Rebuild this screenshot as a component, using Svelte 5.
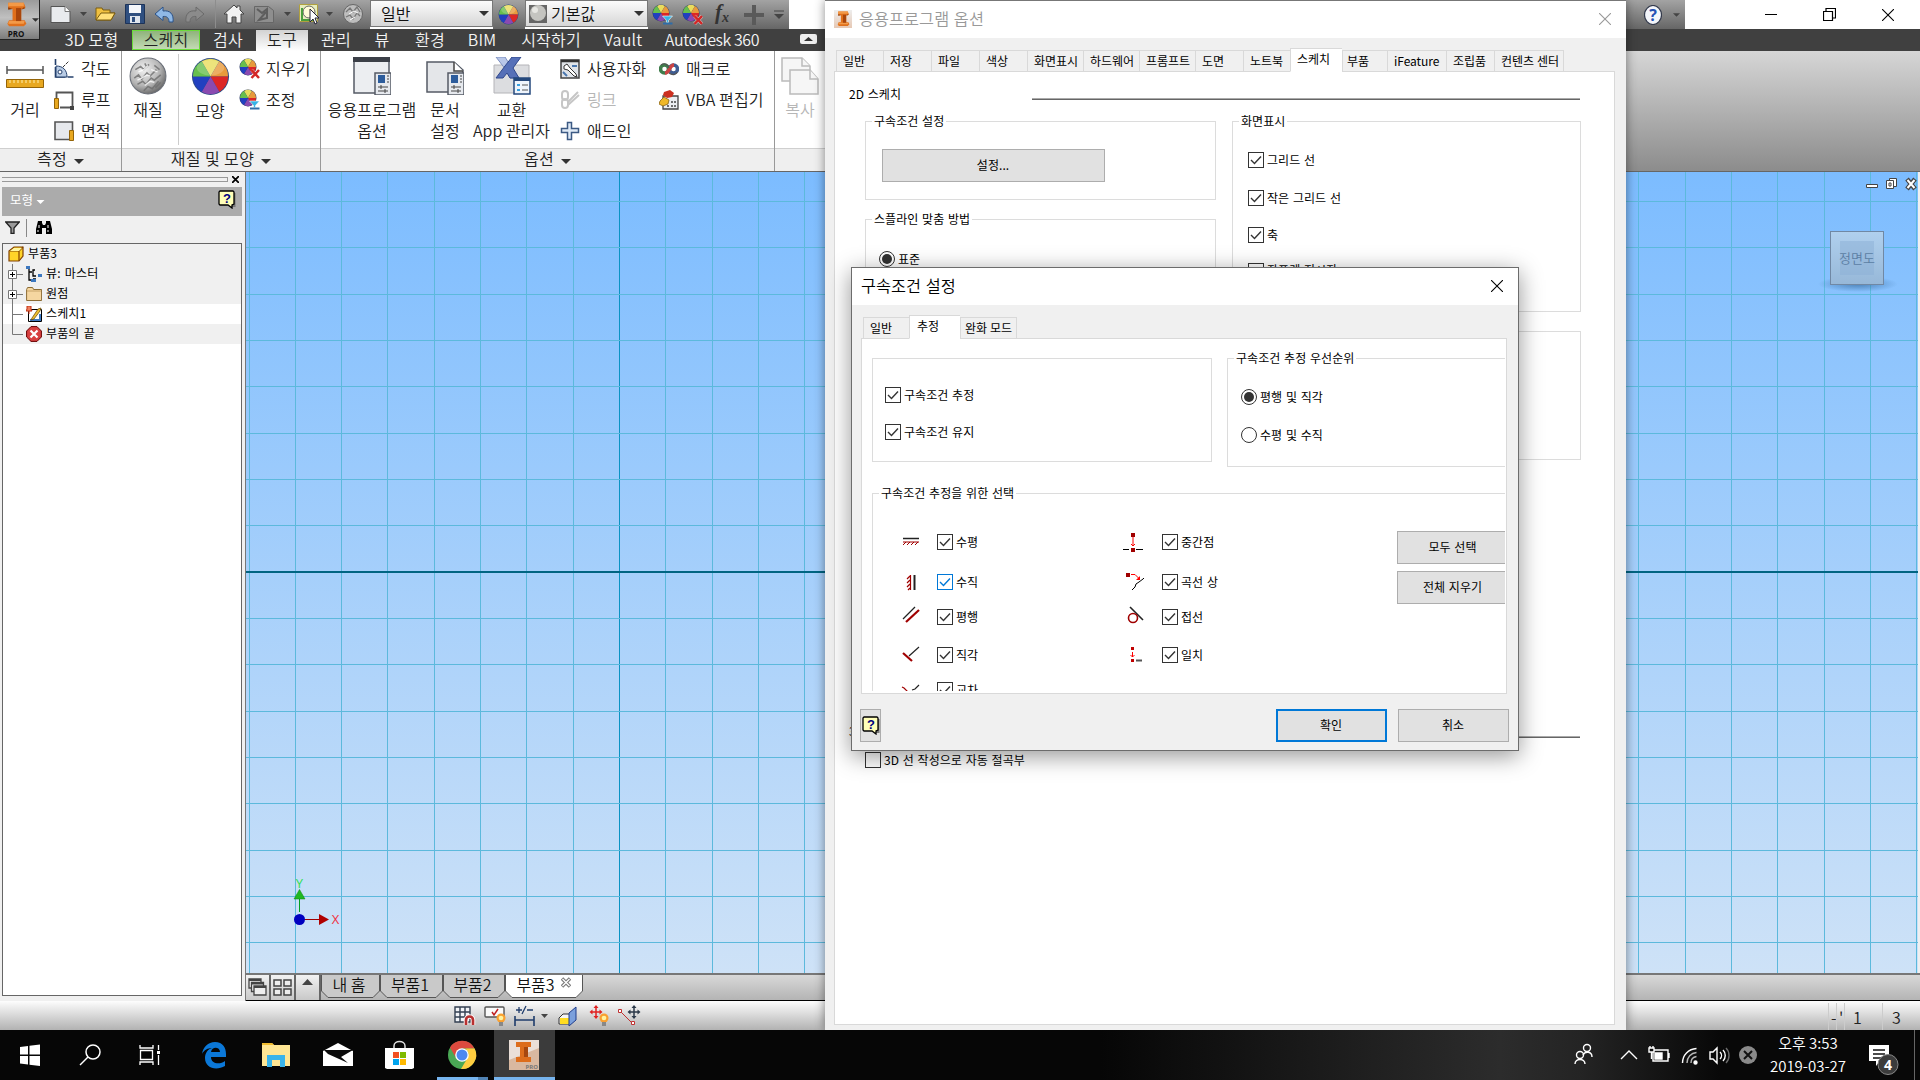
<script lang="ts">
  const ribbonTabs = [
    { name: '3D 모형', w: 81 },
    { name: '스케치', w: 68, kind: 'green' },
    { name: '검사', w: 56 },
    { name: '도구', w: 52, kind: 'active' },
    { name: '관리', w: 56 },
    { name: '뷰', w: 36 },
    { name: '환경', w: 60 },
    { name: 'BIM', w: 44 },
    { name: '시작하기', w: 94 },
    { name: 'Vault', w: 50 },
    { name: 'Autodesk 360', w: 128, kind: 'tight' }
  ];

  const optionTabs = [
    { name: '일반', w: 47 },
    { name: '저장', w: 48 },
    { name: '파일', w: 48 },
    { name: '색상', w: 48 },
    { name: '화면표시', w: 56 },
    { name: '하드웨어', w: 56 },
    { name: '프롬프트', w: 56 },
    { name: '도면', w: 48 },
    { name: '노트북', w: 47 },
    { name: '스케치', w: 52 },
    { name: '부품', w: 45 },
    { name: 'iFeature', w: 59 },
    { name: '조립품', w: 48 },
    { name: '컨텐츠 센터', w: 70 }
  ];
  let optionTab = $state('스케치');

  const constraintTabs = [
    { name: '일반', w: 46 },
    { name: '추정', w: 51 },
    { name: '완화 모드', w: 57 }
  ];
  let constraintTab = $state('추정');

  // left and right item of each row
  const constraints = [
    ['수평', '중간점'],
    ['수직', '곡선 상'],
    ['평행', '접선'],
    ['직각', '일치'],
    ['교차', '']
  ];

  const docTabs = [
    { name: '내 홈', w: 59 },
    { name: '부품1', w: 63 },
    { name: '부품2', w: 62 },
    { name: '부품3', w: 78 }
  ];

  // sketch grid, origin of the canvas is 246,172
  const step = 46.33;
  const vlines = Array.from({ length: 37 }, (_, i) => Math.round(2.5 + i * step));
  const hlines = Array.from({ length: 17 }, (_, i) => Math.round(29 + i * step));
</script>

{#snippet caret()}
  <svg class="caret" width="10" height="5" viewBox="0 0 10 5"><path d="M0 0h10L5 5z" fill="currentColor" /></svg>
{/snippet}

{#snippet wheel(size)}
  <svg width={size} height={size} viewBox="0 0 40 40">
    <circle cx="20" cy="20" r="19" fill="#2c4a86" />
    <path d="M20 20L11 4.400A18 18 0 0 1 29 4.400z" fill="#e9dc5c" />
    <path d="M20 20L29 4.400A18 18 0 0 1 38 20z" fill="#e89a3c" />
    <path d="M20 20L38 20A18 18 0 0 1 29 35.600z" fill="#dc2626" />
    <path d="M20 20L29 35.600A18 18 0 0 1 11 35.600z" fill="#8a4ab0" />
    <path d="M20 20L11 35.600A18 18 0 0 1 2 20z" fill="#2140c0" />
    <path d="M20 20L2 20A18 18 0 0 1 11 4.400z" fill="#67bf4d" />
    <ellipse cx="20" cy="11" rx="14" ry="8" fill="#fff" opacity=".2" />
  </svg>
{/snippet}

{#snippet wheelMark(kind)}
  <svg width="21" height="21" viewBox="0 0 21 21">
    <circle cx="9" cy="9" r="8.500" fill="#2c3a66" />
    <path d="M9 9L5 2A8 8 0 0 1 13 2z" fill="#e9dc5c" />
    <path d="M9 9L13 2A8 8 0 0 1 17 9z" fill="#e89a3c" />
    <path d="M9 9H17A8 8 0 0 1 13 16z" fill="#dc2626" />
    <path d="M9 9L13 16A8 8 0 0 1 5 16z" fill="#8a4ab0" />
    <path d="M9 9L5 16A8 8 0 0 1 1 9z" fill="#2140c0" />
    <path d="M9 9H1A8 8 0 0 1 5 2z" fill="#67bf4d" />
    {#if kind === 'x'}
      <path d="M12.500 12l7.500 8M20 12l-7.500 8" stroke="#fff" stroke-width="3.500" opacity=".5" />
      <path d="M12.500 12l7.500 8M20 12l-7.500 8" stroke="#d32626" stroke-width="2.500" />
    {:else}
      <path d="M10.500 12h10l-4 4.500v2h-2v-2z" fill="#35b3e6" stroke="#fff" stroke-width=".6" />
      <path d="M11 19.500h9.500" stroke="#2e6da8" stroke-width="2" />
    {/if}
  </svg>
{/snippet}

{#snippet ball(size)}
  <svg width={size} height={size} viewBox="0 0 36 36">
    <defs>
      <radialGradient id="ballg" cx=".38" cy=".32" r=".75">
        <stop offset="0" stop-color="#f2f2f2" />
        <stop offset=".6" stop-color="#b4b4b4" />
        <stop offset="1" stop-color="#5c5c5c" />
      </radialGradient>
    </defs>
    <circle cx="18" cy="18" r="17" fill="url(#ballg)" stroke="#6a6f78" />
    <g fill="none" stroke="#6d6d6d" stroke-width="1.500" opacity=".8">
      <path d="M6 12l5-3 3 3 5-5M5 20l4-3 3 4 5-6 3 3 6-6M8 26l5-3 3 3 5-6 3 2 6-5M14 32l4-4 4 2 6-7M24 8l5 4M25 29l5-5M15 6l2 4" />
    </g>
    <g fill="none" stroke="#fff" stroke-width="1.300" opacity=".8">
      <path d="M9 14l5-2 4-4M8 22l4-2 5-3 3 1M15 27l5-4 4 1M21 12l6 2" />
    </g>
  </svg>
{/snippet}

{#snippet inventor(size)}
  <svg width={size} height={size} viewBox="0 0 30 30">
    <path d="M6 1h18l2 5-2 2h-3v13h4l2 4-3 3H7l-2-3 2-4h4V8H6z" fill="#e0701c" />
    <path d="M6 1h18v4H6zM7 22h18l-1 3H6z" fill="#f39a48" />
    <path d="M15 7h6v15h-6z" fill="#a9460c" />
    <path d="M6 6l5 2-5 1zM24 6l2 1-5 2z" fill="#8c3a0a" />
  </svg>
{/snippet}

{#snippet helpIcon()}
  <svg width="18" height="19" viewBox="0 0 18 19">
    <path d="M3 3h14.500v14H14z" fill="#777" />
    <path d="M2 1h13l1 1v12l-2 1v3l-4-3H2l-1-1V2z" fill="#ffffb8" stroke="#000" stroke-width="1.300" />
    <text x="9" y="13" text-anchor="middle" class="qm">?</text>
  </svg>
{/snippet}

{#snippet check(label, on = true, blue = false)}
  <div class="check">
    <svg class:blue width="16" height="16" viewBox="0 0 16 16">
      <rect x=".5" y=".5" width="15" height="15" fill="#fff" stroke="currentColor" />
      {#if on}<path d="M3 8l3.500 3.500L13 4.500" fill="none" stroke="currentColor" stroke-width="1.400" />{/if}
    </svg>
    <span>{label}</span>
  </div>
{/snippet}

{#snippet radio(label, on)}
  <div class="check">
    <svg width="16" height="16" viewBox="0 0 16 16">
      <circle cx="8" cy="8" r="7.500" fill="#fff" stroke="#333" />
      {#if on}<circle cx="8" cy="8" r="5" fill="#333" />{/if}
    </svg>
    <span>{label}</span>
  </div>
{/snippet}

{#snippet cross(size, w = 1.1)}
  <svg width={size} height={size} viewBox="0 0 12 12"><path d="M0 0l12 12M12 0L0 12" stroke="currentColor" stroke-width={w} /></svg>
{/snippet}

{#snippet constraintIcon(name)}
  <svg width="22" height="22" viewBox="0 0 22 22" fill="none">
    {#if name === '수평'}
      <path d="M3 7.500h16" stroke="#222" stroke-width="1.500" />
      <path d="M3 11h16M6 11l-3 3M10 11l-3 3M14 11l-3 3M18 11l-3 3" stroke="#a00000" />
    {:else if name === '수직'}
      <path d="M14.500 4v15" stroke="#222" stroke-width="2" />
      <path d="M10.500 4v15M10 5L7 8M10 9l-3 3M10 13l-3 3M10 17l-2 2" stroke="#a00000" stroke-width="1.200" />
    {:else if name === '평행'}
      <path d="M3 13L15 1" stroke="#222" stroke-width="1.200" />
      <path d="M6 16L19 4" stroke="#a00000" stroke-width="2.200" />
    {:else if name === '직각'}
      <path d="M9 12l10-9" stroke="#222" stroke-width="1.200" />
      <path d="M3 9l9 8" stroke="#a00000" stroke-width="2.200" />
    {:else if name === '교차'}
      <path d="M2 8l2 1 4 4" stroke="#a00000" stroke-width="1.200" />
      <path d="M12 11l3-1 4-4" stroke="#222" stroke-width="1.200" />
    {:else if name === '중간점'}
      <path d="M1 18.500h6M14 18.500h7" stroke="#000" />
      <path d="M11 5v10M9 13l2 2 2-2" stroke="#f00" />
      <path d="M9 2h4v4H9zM9 17h4v4H9z" fill="#a00000" />
    {:else if name === '곡선 상'}
      <path d="M4 2h4v4H4z" fill="#a00000" />
      <path d="M9 3.500h4l4 4" stroke="#f00" /><path d="M18 5v4h-4z" fill="#f00" />
      <path d="M10 19l3-3 1-3 3-2 4-3 3-3" stroke="#000" />
    {:else if name === '접선'}
      <path d="M8 1l13 13" stroke="#222" stroke-width="1.600" />
      <circle cx="11" cy="12" r="4.500" stroke="#a00000" stroke-width="1.600" />
    {:else if name === '일치'}
      <path d="M9 3h3v3H9zM9 15h3v3H9z" fill="#c00000" />
      <path d="M10.500 8v5M8.500 11l2 2 2-2" stroke="#f00" />
      <path d="M14 16.500h6" stroke="#555" stroke-width="2" />
    {/if}
  </svg>
{/snippet}

<div class="screen">
  <div class="top">
    <div class="quick">
      <div class="logo">
        <div class="mark">{@render inventor(26)}<b>PRO</b></div>
        <svg width="7" height="4" viewBox="0 0 10 5"><path d="M0 0h10L5 5z" fill="#333" /></svg>
      </div>
      <svg class="tools" width="330" height="29" viewBox="40 0 330 29">
        <path d="M51 6.500h14l5 5v11H51z" fill="#e9ebee" stroke="#555" /><path d="M65 6.500v5h5" fill="#fff" stroke="#777" />
        <path d="M80 12h7l-3.500 4zM284 12h7l-3.500 4zM326 12h7l-3.500 4z" fill="#444" />
        <path d="M96 19V8h6l1 2h7v3h5l-4 7H96z" fill="#f0c040" stroke="#7a5c10" /><path d="M96 20l5-7h14l-4 7z" fill="#ffdf7a" stroke="#7a5c10" />
        <path d="M125.500 4.500h19v19h-19z" fill="#2f4f80" stroke="#1d3358" /><path d="M129 5h12v8h-12z" fill="#f4f6fa" /><path d="M130 16h10v7h-10z" fill="#dfe5ee" /><path d="M132 17h3v5h-3z" fill="#2f4f80" />
        <path d="M155 14l8-7v4c7-1 11 3 10 11h-4c0-4-2-6-6-5.500v4z" fill="#8fb8e6" stroke="#2b5288" />
        <path d="M204 14l-8-7v4c-7-1-11 3-10 11h4c0-4 2-6 6-5.500v4z" fill="#8b8b8b" stroke="#6a6a6a" />
        <path d="M215.500 0v28" stroke="#8d8d8d" />
        <path d="M224 14l10-9 3 3V6h3v4l4 4h-3v9h-5v-6h-4v6h-5v-9z" fill="#f2f2f2" stroke="#444" />
        <path d="M254.500 6.500h14l5 4v12h-19z" fill="#8e8e8e" stroke="#676767" /><path d="M257 9l5 4 5-4v9l-8 2 7-8" fill="none" stroke="#5e5e5e" stroke-width="2" />
        <path d="M299.500 4.500h18v17h-18z" fill="#e6edbd" stroke="#b0a040" /><circle cx="309" cy="12" r="6" fill="#fffbd8" stroke="#666" /><path d="M302 8v12h13" fill="none" stroke="#4a9e3c" stroke-width="2" /><path d="M310 9l9 9h-4l2 5-2 1-2-5-3 3z" fill="#fff" stroke="#223" />
        <circle cx="353" cy="14" r="9.500" fill="#bdbdbd" stroke="#666" /><path d="M346 12l4-4 3 4 4-5 3 5M346 17l4-2 3 4 4-6 3 3" fill="none" stroke="#777" stroke-width="1.300" /><path d="M349 14l5-3 4 2M350 20l5-3" stroke="#fff" fill="none" />
      </svg>
      <div class="combo"><span>일반</span>{@render caret()}</div>
      <div class="wheelbtn">{@render wheel(21)}</div>
      <div class="combo second">
        <svg width="18" height="18" viewBox="0 0 18 18"><path d="M0 0h18v18H0z" fill="#666" /><circle cx="9" cy="8" r="8" fill="#c4c4c0" /><circle cx="6" cy="5" r="3" fill="#e6e6e2" /></svg>
        <span>기본값</span>{@render caret()}
      </div>
      <div class="more">
        {@render wheelMark('down')}
        {@render wheelMark('x')}
        <span class="fx">f<sub>x</sub></span>
        <svg width="20" height="20" viewBox="0 0 20 20"><path d="M8 0h4v8h8v4h-8v8H8v-8H0V8h8z" fill="#5a5a5a" /></svg>
        <svg width="10" height="9" viewBox="0 0 10 9"><path d="M0 1h10" stroke="#444" /><path d="M0 4h10L5 9z" fill="#444" /></svg>
      </div>
      <div class="helpbar">
        <svg width="18" height="20" viewBox="0 0 18 20"><ellipse cx="9" cy="10" rx="8.500" ry="9.500" fill="#f3f5fa" stroke="#333a4c" stroke-width="1.200" /><text x="9" y="16" text-anchor="middle" class="qm2">?</text></svg>
        <svg width="7" height="4" viewBox="0 0 10 5"><path d="M0 0h10L5 5z" fill="#444" /></svg>
      </div>
      <div class="winctl">
        <svg width="12" height="12" viewBox="0 0 12 12"><path d="M0 5.500h12" stroke="#000" /></svg>
        <svg width="13" height="13" viewBox="0 0 13 13"><path d="M.5 3.500h9v9h-9zM3 3V.500h9.500V10H10" fill="none" stroke="#000" stroke-width="1.200" /></svg>
        {@render cross(12)}
      </div>
    </div>

    <div class="rtabs">
      {#each ribbonTabs as t}
        <div class="rtab {t.kind ?? ''}" style="width: {t.w}px">{t.name}</div>
      {/each}
      <svg class="collapse" width="17" height="10" viewBox="0 0 17 10"><rect width="17" height="10" rx="2" fill="#eee" /><path d="M4 7h9L8.500 3z" fill="#333" /></svg>
    </div>

    <div class="ribbon">
      <div class="rp p1">
        <div class="body">
          <div class="big">
            <svg width="38" height="38" viewBox="0 0 38 38"><path d="M1 13h36M1 9v8M37 9v8" stroke="#555" stroke-width="1.500" /><path d="M.5 22.500h37v8H.5z" fill="#e8a820" stroke="#946408" /><path d="M4 23v3M8 23v3M12 23v3M16 23v3M20 23v3M24 23v3M28 23v3M32 23v3" stroke="#fff0b0" /></svg>
            <span>거리</span>
          </div>
          <div class="list">
            <div><svg width="20" height="20" viewBox="0 0 20 20"><path d="M1.500 0v18H20" fill="none" stroke="#24406c" stroke-width="1.600" stroke-dasharray="6 2 20 2" /><path d="M2 7c7 0 11 4 11 11H2z" fill="#b8cbe4" stroke="#24406c" /><path d="M9 8l6-6" stroke="#333" stroke-dasharray="3 1" /><circle cx="6" cy="13" r="2" fill="#fff" stroke="#24406c" /></svg><span>각도</span></div>
            <div><svg width="20" height="20" viewBox="0 0 20 20"><path d="M2.500 8V2.500h16v15H6" fill="none" stroke="#555" stroke-width="1.800" /><path d="M.5 8.500h4v10h-4z" fill="#e8a820" stroke="#946408" /><path d="M16 16h4v4h-4z" fill="#444" /></svg><span>루프</span></div>
            <div><svg width="20" height="20" viewBox="0 0 20 20"><path d="M1 1h17.500v17.500H1z" fill="#e6e8ec" stroke="#555" stroke-width="1.600" /><path d="M15.500 9.500h4v10h-4z" fill="#e8a820" stroke="#946408" /></svg><span>면적</span></div>
          </div>
        </div>
        <div class="cap">측정 {@render caret()}</div>
      </div>
      <div class="rp p2">
        <div class="body">
          <div class="big w56">{@render ball(38)}<span>재질</span></div>
          <div class="big w61 sep">{@render wheel(39)}<span>모양</span></div>
          <div class="list">
            <div>{@render wheelMark('x')}<span>지우기</span></div>
            <div>{@render wheelMark('down')}<span>조정</span></div>
          </div>
        </div>
        <div class="cap">재질 및 모양 {@render caret()}</div>
      </div>
      <div class="rp p3">
        <div class="body">
          <div class="big w100">
            <svg width="38" height="38" viewBox="0 0 38 38"><path d="M1 1h35v35H1z" fill="#eceef1" stroke="#555b66" stroke-width="1.500" /><path d="M0 0h37v5H0z" fill="#3c4048" /><path d="M22 16h16v22H22z" fill="#e6e9ee" stroke="#555b66" stroke-width="1.500" /><path d="M25 18h7v8h-7z" fill="#2c5c9c" /><path d="M34 19h2M34 22h2M34 25h2M25 30h10M25 34h10M28 28v4M32 32v4" stroke="#444" /></svg>
            <span>응용프로그램<br />옵션</span>
          </div>
          <div class="big w46">
            <svg width="38" height="38" viewBox="0 0 38 38"><path d="M1 5h27l9 8v22H1z" fill="#e4e6e9" stroke="#555b66" stroke-width="1.500" /><path d="M28 5v9h9" fill="#fff" stroke="#444" stroke-width="1.500" /><path d="M22 16h16v22H22z" fill="#e6e9ee" stroke="#555b66" stroke-width="1.500" /><path d="M25 18h7v8h-7z" fill="#2c5c9c" /><path d="M34 19h2M34 22h2M34 25h2M25 30h10M25 34h10M28 28v4M32 32v4" stroke="#444" /></svg>
            <span>문서<br />설정</span>
          </div>
          <div class="big w88">
            <svg width="38" height="38" viewBox="0 0 38 38"><path d="M1 8h35v28H1z" fill="#dcdde0" stroke="#b4b4b8" /><path d="M3 0h9l5 8-4 5zM20 13l6 8h-9z" fill="#b9c7e8" stroke="#7d90c0" /><path d="M19 0h9l-8 11 6 10h-9L14 16l-4 5H3L12 9z" fill="#5670b8" stroke="#30488c" /><path d="M21 21h16v16H21z" fill="#eef4fc" stroke="#24487c" stroke-width="1.500" /><path d="M21 21h16v3H21z" fill="#24487c" /><path d="M24 27h3v2h-3zM24 32h3v2h-3z" fill="#38a0e0" /><path d="M29 28h6M29 33h6" stroke="#555" /></svg>
            <span>교환<br />App 관리자</span>
          </div>
          <div class="list wide">
            <div><svg width="20" height="20" viewBox="0 0 20 20"><path d="M1 1h18v18H1z" fill="#dfe3e8" stroke="#444" stroke-width="1.500" /><path d="M1 2h18" stroke="#333" stroke-width="2.500" /><path d="M4 7l3-2 3 4 6 6 1 3-3-1-6-6-4-1z" fill="#fff" stroke="#333" /><path d="M12 7h5M3 13l4 4" stroke="#4a78b0" stroke-width="2" /></svg><span>사용자화</span></div>
            <div class="off"><svg width="20" height="20" viewBox="0 0 20 20" fill="none" stroke="#c6c6c6" stroke-width="2"><rect x="2" y="1" width="6" height="9" rx="3" /><rect x="2" y="9" width="6" height="9" rx="3" /><path d="M8 12L18 2M8 15L19 5" /></svg><span>링크</span></div>
            <div><svg width="20" height="20" viewBox="0 0 20 20"><path d="M7.500 1.500h4v6h7v4h-7v7h-4v-7h-6v-4h6z" fill="#dfeaf6" stroke="#3c5a84" stroke-width="1.500" /></svg><span>애드인</span></div>
          </div>
          <div class="list">
            <div><svg width="20" height="20" viewBox="0 0 20 20" fill="none"><circle cx="5.500" cy="10" r="4" stroke="#3f7d4c" stroke-width="3.500" /><circle cx="14.500" cy="10" r="4" stroke="#3f5d92" stroke-width="3.500" /><path d="M6 14c5 0 4-8 9-8" stroke="#cc4444" stroke-width="3.500" /><path d="M2 6c4-3 7 0 8 3M10 14c4 3 8 1 8-1" stroke="#555" stroke-width="1.200" /><path d="M4 10h3M13 10h3" stroke="#fff" stroke-width="2" /></svg><span>매크로</span></div>
            <div><svg width="20" height="20" viewBox="0 0 20 20"><path d="M4 6h15v13H4z" fill="#eceef1" stroke="#444" stroke-width="1.300" /><path d="M5 2l6-2 4 3-2 4-5 1-4-3z" fill="#cc3020" /><path d="M1 11l4-4 5 3-1 4-5 2-4-2z" fill="#f0b828" stroke="#8a6414" stroke-width=".8" /><path d="M8 16h2M12 16h2M15 12h2M15 16h2M12 12h2" stroke="#444" stroke-width="1.500" /></svg><span>VBA 편집기</span></div>
          </div>
        </div>
        <div class="cap">옵션 {@render caret()}</div>
      </div>
      <div class="rp p4">
        <div class="body">
          <div class="big off w52">
            <svg width="38" height="38" viewBox="0 0 38 38" fill="#f6f6f6" stroke="#bbb" stroke-width="1.500"><path d="M1 1h20l8 8v15H1z" /><path d="M21 1v8h8" /><path d="M9 13h20l8 9v15H9z" /><path d="M29 13v9h8" /></svg>
            <span>복사</span>
          </div>
        </div>
        <div class="cap"></div>
      </div>
      <div class="rest"></div>
    </div>
  </div>

  <div class="main">
    <div class="browser">
      <div class="grip"><i></i>{@render cross(7, 3)}</div>
      <div class="bhead"><span>모형 <svg width="9" height="4" viewBox="0 0 10 5"><path d="M0 0h10L5 5z" fill="#fff" /></svg></span>{@render helpIcon()}</div>
      <div class="bbar">
        <svg width="15" height="13" viewBox="0 0 15 13"><path d="M.7 1h13.600L9 7v5.500H6V7z" fill="#999" stroke="#222" stroke-width="1.300" /></svg>
        <i></i>
        <svg width="16" height="13" viewBox="0 0 16 13"><path d="M2 0h4v2l1 2h2l1-2V0h4l2 8v5h-6V7H6v6H0V8z" fill="#000" /><path d="M3 4v3M12 4v3M2 9v2M12 9v2" stroke="#fff" /></svg>
      </div>
      <div class="tree">
        <div class="row root">
          <svg width="16" height="16" viewBox="0 0 16 16"><path d="M1 5l5-4h9v9l-4 5H1z" fill="#ffd428" stroke="#804000" stroke-width="1.200" /><path d="M2 5h9v10M11 5l4-4" fill="none" stroke="#804000" stroke-width="1.200" /><path d="M2 5l4-3h8l-3 3z" fill="#fff6a0" /></svg>
          <span>부품3</span>
        </div>
        <div class="row">
          <svg width="16" height="20" viewBox="0 0 16 20"><path d="M5.500 0v20M6 10.500h10" stroke="#777" /><path d="M1.500 6.500h8v8h-8z" fill="#fff" stroke="#777" /><path d="M3 10.500h5M5.500 8v5" stroke="#000" /></svg>
          <svg width="16" height="16" viewBox="0 0 16 16"><path d="M3 3v11h3M3 6h3M9 4H7v6h3M10 13H7" fill="none" stroke="#000" stroke-width="1.300" /><path d="M0 0h4v3H0zM12 8h4v3h-4zM5 13h5v3H5z" fill="#3c78c0" /></svg>
          <span>뷰: 마스터</span>
        </div>
        <div class="row">
          <svg width="16" height="20" viewBox="0 0 16 20"><path d="M5.500 0v20M6 10.500h10" stroke="#777" /><path d="M1.500 6.500h8v8h-8z" fill="#fff" stroke="#777" /><path d="M3 10.500h5M5.500 8v5" stroke="#000" /></svg>
          <svg width="16" height="16" viewBox="0 0 16 16"><path d="M.6 14.500V3.500l1-2h5l1 2h8v11z" fill="#f5d6a0" stroke="#8c6c34" /><path d="M1 5h14" stroke="#c8a468" /></svg>
          <span>원점</span>
        </div>
        <div class="row white">
          <svg width="16" height="20" viewBox="0 0 16 20"><path d="M5.500 0v20M6 10.500h10" stroke="#777" /></svg>
          <svg width="16" height="16" viewBox="0 0 16 16"><path d="M2.500 3.500h13v12h-13z" fill="#fff" stroke="#000" /><path d="M4 14h10V8" stroke="#3c78c0" stroke-width="2" fill="none" /><path d="M6 12l6-9 3-1-1 3-6 8-3 1z" fill="#f0c030" stroke="#604000" stroke-width=".7" /><path d="M1 0h4v3l1 2H0l1-2zM3 5v3" fill="#f08060" stroke="#c03010" /></svg>
          <span>스케치1</span>
        </div>
        <div class="row">
          <svg width="16" height="20" viewBox="0 0 16 20"><path d="M5.500 0v10.500H16" fill="none" stroke="#777" /></svg>
          <svg width="16" height="16" viewBox="0 0 16 16"><path d="M5 .6h6L15.400 5v6L11 15.400H5L.6 11V5z" fill="#d84040" stroke="#600" /><path d="M4.500 4.500l7 7M11.500 4.500l-7 7" stroke="#fff" stroke-width="2.200" /></svg>
          <span>부품의 끝</span>
        </div>
      </div>
    </div>

    <div class="work">
      <svg class="canvas" width="1672" height="801" viewBox="0 0 1672 801">
        <defs>
          <linearGradient id="sky" x1="0" y1="0" x2="0" y2="1">
            <stop offset="0" stop-color="#7cbcff" />
            <stop offset="1" stop-color="#cee2f7" />
          </linearGradient>
          <linearGradient id="cube" x1="0" y1="0" x2="0" y2="1">
            <stop offset="0" stop-color="#b0d0ee" />
            <stop offset="1" stop-color="#97b8d8" />
          </linearGradient>
          <radialGradient id="cubeshadow">
            <stop offset="0" stop-color="#3f74a8" stop-opacity=".8" />
            <stop offset="1" stop-color="#3f74a8" stop-opacity="0" />
          </radialGradient>
        </defs>
        <rect width="1672" height="801" fill="url(#sky)" />
        {#each vlines as x}
          <path d="M{x + 0.5} 0V801" stroke={x === 373 ? '#0a93c4' : '#5cb9dc'} />
        {/each}
        {#each hlines as y}
          <path d="M0 {y + 0.5}H1672" stroke="#5cb9dc" />
        {/each}
        <path d="M0 400H1672" stroke="#006482" stroke-width="2" />
        <path d="M53.500 740V726" stroke="#00a020" /><path d="M48 727l5.500-9.500L59 727z" fill="#20b820" stroke="#0a8010" stroke-width=".5" />
        <path d="M53 747.500h22" stroke="#a00000" /><path d="M73 742l10 5.500-10 5.500z" fill="#b00000" />
        <circle cx="53.500" cy="747.500" r="5.500" fill="#0000c0" />
        <text x="53.500" y="716" class="axis" fill="#2fe050" text-anchor="middle">Y</text>
        <text x="89.500" y="752" class="axis" fill="#f03040" text-anchor="middle">X</text>
        <ellipse cx="1612" cy="112" rx="40" ry="8" fill="url(#cubeshadow)" />
        <rect x="1584.500" y="59.500" width="53" height="53" fill="url(#cube)" stroke="#7088a4" />
        <rect x="1594" y="69" width="34" height="34" fill="#8bb0d6" opacity=".5" />
        <text x="1611" y="91" class="cubetext" text-anchor="middle">정면도</text>
        <g fill="#fff" stroke="#444"><path d="M1620.500 12.500h11v3h-11zM1643.500 6.500h7v8h-7z" /><path d="M1640.500 8.500h7v8h-7zM1643 11h2v3h-2z" /></g>
        <path d="M1661 7l8 10M1669 7l-8 10" stroke="#444" stroke-width="4.500" /><path d="M1661.500 8l7 8M1668.500 8l-7 8" stroke="#fff" stroke-width="2" />
      </svg>
      <div class="docs">
        <div class="dbtn"><svg width="19" height="19" viewBox="0 0 19 19" fill="#eee" stroke="#444" stroke-width="1.300"><path d="M1 1h12v9H1z" /><path d="M3.500 4.500h12v9h-12z" /><path d="M6 8h12v9H6z" /><path d="M1 2h12M4 5.500h11M6 9h12" stroke-width="2" /></svg></div>
        <div class="dbtn"><svg width="19" height="17" viewBox="0 0 19 17" fill="#eee" stroke="#444" stroke-width="1.500"><path d="M1 1h7v6H1zM11 1h7v6h-7zM1 10h7v6H1zM11 10h7v6h-7z" /></svg></div>
        <div class="dbtn up"><svg width="11" height="6" viewBox="0 0 11 6"><path d="M0 6h11L5.500 0z" fill="#444" /></svg></div>
        {#each docTabs as t, i}
          <div class="dtab" class:on={i === 3} style="width: {t.w}px">
            <svg width={t.w} height="24" viewBox="0 0 {t.w} 24"><path d="M.5 0V16L7 22.500H{t.w - 7}L{t.w - 0.5} 16V0" fill={i === 3 ? '#fff' : '#c9c9c9'} stroke="#555" /></svg>
            <span>{t.name}</span>
            {#if i === 3}<svg class="dx" width="10" height="11" viewBox="0 0 10 11"><path d="M1 1.500l8 8M9 1.500l-8 8" stroke="#777" stroke-width="3.500" /><path d="M1.500 2l7 7M8.500 2l-7 7" stroke="#fff" stroke-width="1.300" /></svg>{/if}
          </div>
        {/each}
      </div>
    </div>
  </div>

  <div class="status">
    <svg class="sicons" width="190" height="22" viewBox="0 0 190 22">
      <path d="M1 2h15v15H1zM6 2v15M11 2v15M1 7h15M1 12h15" fill="#f2f4f8" stroke="#333f52" stroke-width="1.400" /><path d="M12 20v-5a3.500 3.500 0 0 1 7 0v5" fill="none" stroke="#fff" stroke-width="4.500" /><path d="M12 20v-5a3.500 3.500 0 0 1 7 0v5" fill="none" stroke="#b83030" stroke-width="2.700" />
      <rect x="31" y="2" width="19" height="10" rx="1" fill="#fafafa" stroke="#555" stroke-width="1.400" /><path d="M38 7l2 3 4-6" stroke="#c02020" fill="none" stroke-width="1.500" />
      <circle cx="47" cy="13" r="4.500" fill="#f9a030" /><circle cx="47" cy="13" r="2.300" fill="#fff3a0" /><path d="M45 17h4v4h-4z" fill="#888" />
      <path d="M61 11v10M80 11v10M61 15h19" stroke="#1f3c6c" stroke-width="1.600" /><path d="M62 5h6M65 2v6M68 9l4-8M73 5h6" stroke="#1f3c6c" stroke-width="1.300" />
      <path d="M87 9h7l-3.500 4z" fill="#444" />
      <path d="M105 13l4-4h7v10h-11z" fill="#f4f4f4" stroke="#333" /><path d="M106 13h9v6h-9z" fill="#ffdc20" /><path d="M115 8l7-6v13l-7 6z" fill="#7ba0dc" stroke="#1e3c8c" />
      <path d="M142 2v10M137 7h10" stroke="#e02020" stroke-width="1.500" /><path d="M142 0l2.500 3h-5zM142 14l2.500-3h-5zM135.500 7l3-2.500v5zM148.500 7l-3-2.500v5z" fill="#e02020" /><circle cx="150" cy="13" r="4.500" fill="#f9a030" /><circle cx="150" cy="13" r="2.300" fill="#fff3a0" /><path d="M148 17h4v4h-4z" fill="#888" />
      <path d="M166 6l13 13" stroke="#c03030" /><path d="M164.500 4.500h3v3h-3zM177.500 16.500h3v3h-3z" fill="#fff" stroke="#c03030" /><path d="M180 2v10M175 7h10" stroke="#2c3a4a" stroke-width="1.500" /><path d="M180 0l2.500 3h-5zM180 14l2.500-3h-5zM173.500 7l3-2.500v5zM186.500 7l-3-2.500v5z" fill="#2c3a4a" />
    </svg>
    <div class="cells"><span>-</span><span>'</span><span>1</span><span>3</span></div>
  </div>

  <div class="dialog options">
    <div class="dtitle">
      <span class="appicon">{@render inventor(16)}</span>
      <span>응용프로그램 옵션</span>
      <div class="close">{@render cross(12)}</div>
    </div>
    <div class="tabs">
      {#each optionTabs as t}
        <div class="tab" class:sel={t.name === optionTab} style="width: {t.w}px">{t.name}</div>
      {/each}
    </div>
    <div class="pane">
      <div class="section"><span>2D 스케치</span><i></i></div>
      <div class="columns">
        <div class="left">
          <fieldset class="f1">
            <legend>구속조건 설정</legend>
            <button>설정...</button>
          </fieldset>
          <fieldset class="f2">
            <legend>스플라인 맞춤 방법</legend>
            {@render radio('표준', true)}
          </fieldset>
        </div>
        <div class="right">
          <fieldset class="f3">
            <legend>화면표시</legend>
            {@render check('그리드 선')}
            {@render check('작은 그리드 선')}
            {@render check('축')}
            {@render check('좌표계 지시자', false)}
          </fieldset>
          <div class="box"></div>
        </div>
      </div>
      <div class="section s3d"><span>3D 스케치</span><i></i></div>
      <div class="bend">{@render check('3D 선 작성으로 자동 절곡부', false)}</div>
    </div>
  </div>

  <div class="dialog limits">
    <div class="dtitle">
      <span>구속조건 설정</span>
      <div class="close">{@render cross(12)}</div>
    </div>
    <div class="tabs">
      {#each constraintTabs as t}
        <div class="tab" class:sel={t.name === constraintTab} style="width: {t.w}px">{t.name}</div>
      {/each}
    </div>
    <div class="pane">
      <div class="clip">
        <div class="toprow">
          <div class="box infer">
            {@render check('구속조건 추정')}
            {@render check('구속조건 유지')}
          </div>
          <fieldset class="prio">
            <legend>구속조건 추정 우선순위</legend>
            {@render radio('평행 및 직각', true)}
            {@render radio('수평 및 수직', false)}
          </fieldset>
        </div>
        <fieldset class="choose">
          <legend>구속조건 추정을 위한 선택</legend>
          <div class="inner">
            <div class="grid">
              {#each constraints as [a, b]}
                <div class="ci">{@render constraintIcon(a)}</div>
                {@render check(a, true, a === '수직')}
                <div class="ci second">{@render constraintIcon(b)}</div>
                {#if b}{@render check(b)}{:else}<div></div>{/if}
              {/each}
            </div>
            <div class="side">
              <button>모두 선택</button>
              <button>전체 지우기</button>
            </div>
          </div>
        </fieldset>
      </div>
    </div>
    <div class="foot">
      <button class="help">{@render helpIcon()}</button>
      <button class="ok">확인</button>
      <button>취소</button>
    </div>
  </div>

  <div class="taskbar">
    <svg class="apps" width="560" height="50" viewBox="0 0 560 50">
      <path d="M20 17l8-1v8.500h-8zM29.500 15.800L40 14.500v10H29.500zM20 26h8v8.500l-8-1zM29.500 26H40v10l-10.500-1.300z" fill="#fff" />
      <circle cx="93" cy="22" r="7" fill="none" stroke="#fff" stroke-width="1.500" /><path d="M88 27l-8 8" stroke="#fff" stroke-width="1.500" />
      <path d="M140 15v3h13v-3M140.500 20.500h12v9h-12zM140 35v-3h13v3M158.500 15v5M158.500 25v10" fill="none" stroke="#fff" stroke-width="1.300" /><path d="M157 21h3v3h-3z" fill="#fff" />
      <path d="M202 24c1-7 6-12 13-12 8 0 11 6 11 12v3h-15c0 7 9 8 14 4v5c-9 5-20 2-20-8 0-5 3-9 7-10-4 0-8 2-10 6zM211 22h9c0-5-8-6-9 0z" fill="#0b78d8" fill-rule="evenodd" />
      <path d="M262 13h10l2 2h16v21h-28z" fill="#ffe694" /><path d="M262 13h10l2 2h-12z" fill="#f0bc30" /><path d="M267 37V25h18v12h-5v-7h-8v7z" fill="#3ab4ea" />
      <path d="M323 21l15-8 15 8v15h-30z" fill="#fff" /><path d="M324 20h29l-12 7 7 6-20-9z" fill="#0a0a0a" />
      <path d="M385 18h29v20l-2 1h-25l-2-1z" fill="#fff" /><path d="M394 18v-2c0-6 11-6 11 0v2" fill="none" stroke="#ddd" stroke-width="1.500" /><path d="M393 22h6v6h-6z" fill="#f25022" /><path d="M400 22h6v6h-6z" fill="#7fba00" /><path d="M393 29h6v6h-6z" fill="#00a4ef" /><path d="M400 29h6v6h-6z" fill="#ffb900" />
      <circle cx="462" cy="25" r="14" fill="#4aa855" /><path d="M450 17.500A14 14 0 0 1 474.500 18.500H462A7 7 0 0 0 456 28z" fill="#dc4a3e" /><path d="M474.600 18.500A14 14 0 0 1 461 39l6.500-11A7 7 0 0 0 465 18.500z" fill="#ffcd40" /><circle cx="462" cy="25" r="6.800" fill="#fff" /><circle cx="462" cy="25" r="5.500" fill="#4c88f0" />
      <path d="M437 47h41v3h-41z" fill="#76b4ee" /><path d="M478 47h10v3h-10z" fill="#5183b4" />
      <path d="M494 0h61v50h-61z" fill="#3b3b3b" /><path d="M494 47h61v3h-61z" fill="#76b4ee" />
      <path d="M509 10h30v30h-30z" fill="#eadfd8" /><path d="M509 30l30-12v22h-30z" fill="#d9b8a0" />
      <path d="M516 12h15v5h-3v10h3v5h-15v-5h4V17h-4z" fill="#dd6d1c" /><path d="M524 17h4v10h-4z" fill="#a6470f" />
      <text x="538" y="39" text-anchor="end" class="pro">PRO</text>
    </svg>
    <svg class="tray" width="195" height="50" viewBox="0 0 195 50" fill="none" stroke="#fff" stroke-width="1.400">
      <circle cx="22" cy="18" r="3.500" /><circle cx="15" cy="25" r="3.500" /><path d="M10 34c0-6 10-6 10 0M18 25c2-4 9-4 9 2" />
      <path d="M56 29l8-8 8 8" />
      <path d="M88 20h15v11H88zM104 23v5" /><path d="M90 23h7v6h-7z" fill="#fff" /><path d="M84 18h5v4h-5zM86.500 22v7M85 16v2M88 16v2" fill="#0a0a0a" />
      <path d="M117.500 33c0-8 6-14 14-14.500" /><path d="M122 33c0-6 4-10 9.500-10.500M126 33c0-4 2-6 5.500-6.500" opacity=".7" /><circle cx="130.500" cy="32.500" r="1.500" fill="#fff" />
      <path d="M145 22h3l4-4v15l-4-4h-3zM155 22c2 2 2 5 0 7M158 20c3 3 3 8 0 11" /><path d="M161 18c4 4 4 11 0 15" opacity=".4" />
      <circle cx="183" cy="25" r="9" fill="#8a8a8a" stroke="none" /><path d="M179 21l8 8M187 21l-8 8" stroke="#111" stroke-width="2" />
    </svg>
    <div class="clock"><span>오후 3:53</span><span>2019-03-27</span></div>
    <svg class="note" width="50" height="50" viewBox="0 0 50 50"><path d="M0 15h20v16h-9l-4 5v-5H0z" fill="#fff" /><path d="M4 20h12M4 24h12M4 28h8" stroke="#111" stroke-width="1.300" /><circle cx="19" cy="34.500" r="10" fill="#3c3c3c" stroke="#888" /><text x="19" y="39.500" text-anchor="middle" class="badge">4</text><path d="M45.500 0v50" stroke="#666" /></svg>
  </div>
</div>

<style>
  :global(body) {
    margin: 0;
    overflow: hidden;
  }
  .screen {
    position: relative;
    width: 1920px;
    height: 1080px;
    overflow: hidden;
    display: flex;
    flex-direction: column;
    background: #f0f0f0;
    font-family: "Noto Sans CJK KR", "Noto Sans", sans-serif;
    font-size: 16px;
    font-weight: 350;
    color: #222;
    white-space: nowrap;
  }
  .screen * {
    box-sizing: border-box;
  }
  svg {
    display: block;
    flex: none;
  }
  .caret {
    display: inline-block;
    color: #333;
  }

  /* quick access bar */
  .quick {
    display: flex;
    height: 29px;
    background: #fff;
  }
  .logo {
    display: flex;
    align-items: center;
    gap: 3px;
    width: 40px;
    height: 40px;
    padding-left: 3px;
    background: linear-gradient(#9a9a9a, #c0c0c0 45%, #7c7c7c);
    border: 1px solid #222;
    border-width: 0 1px 1px 0;
    z-index: 1;
  }
  .mark {
    display: flex;
    flex-direction: column;
    align-items: center;
    width: 26px;
  }
  .mark b {
    font: bold 8px/8px "Open Sans", sans-serif;
    margin-top: 2px;
    color: #111;
  }
  .tools, .wheelbtn, .more, .helpbar {
    background: linear-gradient(#a3a3a3, #666);
  }
  .combo {
    display: flex;
    align-items: center;
    width: 123px;
    height: 27px;
    padding: 0 3px 0 10px;
    background: linear-gradient(#fcfcfc, #d6d6d6);
    border: 1px solid #777;
    color: #111;
    line-height: 24px;
  }
  .combo span {
    margin-top: -2px;
  }
  .combo.second {
    padding-left: 3px;
  }
  .combo.second span {
    margin-left: 4px;
  }
  .combo .caret {
    margin-left: auto;
  }
  .wheelbtn {
    width: 32px;
    padding: 4px 0 0 5px;
  }
  .more {
    display: flex;
    align-items: center;
    width: 141px;
    padding-left: 4px;
  }
  .more :global(svg) {
    margin-right: 9px;
  }
  .more :global(svg:last-child) {
    margin: 0 0 0 1px;
  }
  .fx {
    width: 32px;
    padding-left: 3px;
    font: italic bold 21px/22px "Liberation Serif", serif;
    color: #333;
  }
  .fx sub {
    font-size: 14px;
    vertical-align: -3px;
  }
  .helpbar {
    display: flex;
    align-items: center;
    gap: 11px;
    width: 60px;
    margin-left: 836px;
    padding-left: 19px;
  }
  .winctl {
    display: flex;
    flex: 1;
    align-items: center;
    justify-content: space-between;
    padding: 0 26px 0 80px;
    color: #000;
  }

  .rtabs {
    display: flex;
    height: 22px;
    padding-left: 51px;
    background: #404040;
    color: #f4f4f4;
  }
  .rtab {
    text-align: center;
    line-height: 20px;
    letter-spacing: 0.2px;
  }
  .rtab.tight {
    letter-spacing: -0.4px;
  }
  .rtab.green {
    margin-top: 1px;
    height: 20px;
    line-height: 17px;
    background: linear-gradient(#8fb37c, #c3dab4);
    border: 1px solid #6bdc3a;
    color: #222;
  }
  .rtab.active {
    margin-top: 1px;
    line-height: 19px;
    background: linear-gradient(#d2d2d2, #fff);
    color: #222;
  }
  .collapse {
    margin: 5px 0 0 24px;
  }

  .ribbon {
    display: flex;
    height: 121px;
    background: #fff;
    border-bottom: 1px solid #666;
  }
  .rp {
    display: flex;
    flex-direction: column;
    border-right: 1px solid #999;
  }
  .rp .body {
    display: flex;
    flex: 1;
    padding-top: 3px;
  }
  .cap {
    height: 23px;
    background: #efefef;
    border-top: 1px solid #cfcfcf;
    text-align: center;
    line-height: 18px;
    letter-spacing: 0.4px;
  }
  .cap .caret {
    margin-left: 3px;
    vertical-align: 1px;
  }
  .p1 { width: 122px; }
  .p2 { width: 199px; }
  .p3 { width: 454px; }
  .p4 { width: 50px; border: 0; overflow: hidden; }
  .rest {
    flex: 1;
    background: linear-gradient(#d6d6d6, #8c8c8c);
  }
  .big {
    display: flex;
    flex-direction: column;
    align-items: center;
    width: 50px;
    padding-top: 3px;
    text-align: center;
    line-height: 21px;
  }
  .big span {
    margin-top: 4px;
  }
  .w56 { width: 56px; padding-right: 4px; }
  .w61 { width: 63px; margin-right: -2px; }
  .w100 { width: 102px; }
  .w46 { width: 44px; }
  .w88 { width: 89px; }
  .w52 { width: 54px; }
  .sep {
    height: 91px;
    border-left: 1px solid #ccc;
  }
  .list {
    display: flex;
    flex-direction: column;
    padding-left: 4px;
  }
  .list > div {
    display: flex;
    align-items: center;
    gap: 7px;
    height: 31px;
  }
  .list svg {
    margin-top: -2px;
  }
  .list span {
    margin-top: -4px;
    letter-spacing: 0.1px;
  }
  .p2 .list { padding-left: 0; }
  .p2 .list > div { gap: 6px; }
  .wide { width: 99px; }
  .off {
    color: #b6b6b6;
  }

  /* model browser */
  .main {
    display: flex;
    height: 829px;
  }
  .browser {
    display: flex;
    flex-direction: column;
    width: 246px;
    padding: 0 3px 5px 2px;
    border-right: 1px solid #777;
  }
  .grip {
    display: flex;
    align-items: center;
    gap: 4px;
    height: 15px;
    color: #000;
  }
  .grip i {
    width: 226px;
    height: 5px;
    border: 1px solid #999;
    border-left: 0;
  }
  .bhead {
    display: flex;
    align-items: center;
    justify-content: space-between;
    height: 29px;
    padding: 0 6px 4px 8px;
    background: #ababab;
    color: #fff;
    font-size: 12.5px;
    font-weight: 400;
  }
  .bhead span svg {
    display: inline-block;
    vertical-align: 1px;
  }
  .bbar {
    display: flex;
    align-items: center;
    height: 27px;
    padding: 0 0 4px 3px;
  }
  .bbar i {
    height: 18px;
    margin: 0 9px 0 6px;
    border-left: 1px solid #888;
  }
  .tree {
    flex: 1;
    background: #fff;
    border: 1px solid #666;
    font-size: 12px;
    font-weight: 400;
    color: #000;
    letter-spacing: 0.1px;
    word-spacing: 1.500px;
  }
  .row {
    display: flex;
    align-items: center;
    height: 20px;
    padding-left: 4px;
    background: #f0f0f0;
    line-height: 17px;
    gap: 4px;
  }
  .row svg:first-child:not(:nth-last-child(2)) {
    margin-right: -1px;
  }
  .row span {
    margin-top: -3px;
  }
  .root { padding-left: 5px; }
  .white { background: #fff; }

  .work {
    display: flex;
    flex-direction: column;
    width: 1674px;
  }
  .docs {
    display: flex;
    height: 28px;
    border-top: 2px solid #777;
    border-bottom: 1px solid #000;
    background: linear-gradient(#d8d8d8, #b4b4b4);
    color: #111;
  }
  .dbtn {
    display: flex;
    align-items: center;
    justify-content: center;
    width: 25px;
    background: linear-gradient(#f2f2f2, #c8c8c8);
    border-right: 2px solid #666;
  }
  .dbtn.up { align-items: flex-start; padding-top: 4px; }
  .dtab {
    display: grid;
    line-height: 19px;
  }
  .dtab > * {
    grid-area: 1 / 1;
  }
  .dtab span {
    padding-right: 3px;
    text-align: center;
  }
  .dtab.on span {
    padding-right: 17px;
  }
  .dx {
    margin: 2px 0 0 56px;
  }

  .status {
    display: flex;
    justify-content: space-between;
    height: 29px;
    background: linear-gradient(#fdfdfd, #b2b2b2);
  }
  .sicons {
    margin: 4px 0 0 454px;
  }
  .cells {
    display: flex;
    padding-top: 2px;
    line-height: 28px;
  }
  .cells span {
    width: 8px;
    border-left: 1px solid #ccc;
    overflow: hidden;
  }
  .cells span:nth-child(-n + 2) { padding-left: 2px; }
  .cells span:nth-child(3) { width: 38px; padding-left: 8px; }
  .cells span:nth-child(4) { width: 38px; padding-left: 9px; }

  /* dialogs */
  .dialog {
    position: absolute;
    display: flex;
    flex-direction: column;
    background: #f0f0f0;
    font-size: 12px;
    font-weight: 400;
    color: #000;
    word-spacing: 1px;
    letter-spacing: 0.050px;
  }
  .options {
    left: 825px;
    top: 0;
    width: 801px;
    height: 1030px;
    border-top: 1px solid #777;
    box-shadow: 0 0 10px rgba(0, 0, 0, 0.45);
  }
  .limits {
    left: 851px;
    top: 267px;
    width: 668px;
    height: 484px;
    border: 1px solid #6c6c6c;
    box-shadow: 0 5px 22px rgba(0, 0, 0, 0.42);
  }
  .dtitle {
    display: flex;
    align-items: center;
    height: 37px;
    padding: 0 15px 2px 9px;
    background: #fff;
    font-size: 16.300px;
    font-weight: 350;
    line-height: 28px;
  }
  .dtitle > span:not(.appicon) {
    margin-top: -2px;
  }
  .options .dtitle {
    padding-right: 15px;
    color: #999;
  }
  .appicon {
    padding: 1px;
    margin-right: 7px;
    background: linear-gradient(#eee, #e6c8b4);
  }
  .close {
    margin-left: auto;
  }
  .tabs {
    display: flex;
    align-items: flex-end;
    height: 34px;
    margin-bottom: -1px;
    padding-left: 11px;
    z-index: 1;
  }
  .tab {
    height: 22px;
    padding-left: 6px;
    border: 1px solid #d9d9d9;
    border-right: 0;
    line-height: 19px;
    letter-spacing: -0.050px;
    word-spacing: 0.500px;
  }
  .options .sel + .tab { padding-left: 4px; }
  .tab:last-child {
    border-right: 1px solid #d9d9d9;
  }
  .tab.sel {
    height: 24px;
    background: #fff;
    border-bottom-color: #fff;
  }
  .limits .tab.sel { padding-left: 7px; }
  .limits .tab:last-child { padding-left: 4px; }
  .pane {
    background: #fff;
    border: 1px solid #d9d9d9;
  }
  .options .pane {
    width: 781px;
    height: 954px;
    margin-left: 9px;
    padding: 14px 0 0 14px;
  }
  .section {
    display: flex;
    width: 731px;
    height: 16px;
    line-height: 16px;
  }
  .section span {
    width: 183px;
  }
  .section i {
    flex: 1;
    height: 2px;
    margin-top: 12px;
    background: linear-gradient(#aaa 50%, #666 50%);
  }
  .columns {
    display: flex;
    gap: 16px;
    height: 347px;
    margin: 11px 0 0 16px;
  }
  .left { width: 351px; }
  .right { width: 349px; }
  fieldset {
    min-width: 0;
    margin: 0;
    padding: 0;
    border: 1px solid #dcdcdc;
  }
  legend {
    margin-left: 6px;
    padding: 0 2px;
    height: 16px;
    line-height: 15px;
  }
  .box {
    border: 1px solid #dcdcdc;
  }
  .f1 { height: 87px; }
  .f1 button { width: 223px; margin: 20px 0 0 16px; }
  .f2 { height: 248px; margin-top: 11px; }
  .f2 .check { margin: 24px 0 0 13px; }
  .f3 { height: 199px; }
  .f3 .check { margin: 0 0 21.500px 15px; }
  .f3 legend + .check { margin-top: 23px; }
  .f3 .check:nth-child(4) { margin-bottom: 20px; }
  .f3 .check:nth-child(5) span { margin-top: -4px; }
  .right .box {
    height: 129px;
    margin-top: 19px;
  }
  .s3d {
    margin-top: 264px;
    line-height: 14px;
  }
  .bend {
    margin: 12px 0 0 16px;
  }
  .check {
    display: flex;
    align-items: center;
    gap: 3px;
    height: 16px;
    line-height: 15px;
    color: #000;
  }
  .check span {
    margin-top: -1px;
  }
  .check svg {
    color: #333;
  }
  .check svg.blue {
    color: #0078d7;
  }
  button {
    display: block;
    height: 33px;
    padding: 0 1px 3px 0;
    background: #e1e1e1;
    border: 1px solid #adadad;
    font: inherit;
    letter-spacing: inherit;
    word-spacing: inherit;
    color: #000;
  }
  .limits .pane {
    width: 646px;
    height: 356px;
    margin-left: 9px;
  }
  .clip {
    width: 643px;
    height: 352px;
    overflow: hidden;
    padding: 11px 0 0 10px;
  }
  .toprow {
    display: flex;
    align-items: flex-start;
    gap: 15px;
  }
  .infer {
    flex: none;
    width: 340px;
    height: 104px;
    margin-top: 8px;
    padding: 28px 0 0 12px;
  }
  .infer .check { margin-bottom: 21px; }
  .prio {
    flex: none;
    width: 300px;
    height: 117px;
  }
  .prio .check { margin: 0 0 22px 13px; }
  .prio legend + .check { margin-top: 23px; }
  .choose {
    width: 700px;
    height: 300px;
    margin-top: 18px;
  }
  .inner {
    display: flex;
    padding: 21px 0 0 22px;
  }
  .grid {
    display: grid;
    grid-template-columns: 42px 183px 42px 235px;
    grid-template-rows: 40px 40px 30px 46px 24px;
    align-items: center;
  }
  .ci {
    padding-left: 5px;
  }
  .ci.second {
    padding-left: 2px;
  }
  .side {
    display: flex;
    flex-direction: column;
    gap: 7px;
    padding-top: 9px;
  }
  .side button { width: 112px; }
  .foot {
    display: flex;
    padding: 15px 9px 0 8px;
  }
  .foot button {
    width: 111px;
    margin-left: 11px;
  }
  .foot .help {
    width: 21px;
    margin: 0 auto 0 0;
    padding: 0 0 0 1px;
  }
  .foot .ok {
    border: 2px solid #0078d7;
  }

  .taskbar {
    display: flex;
    height: 50px;
    background: linear-gradient(90deg, #060606 0 1100px, #2c2c2c 1500px, #242424 1580px, #080808 1720px);
    color: #fff;
    z-index: 1;
  }
  .tray {
    margin-left: 1005px;
  }
  .clock {
    display: flex;
    flex-direction: column;
    width: 96px;
    padding-top: 1px;
    text-align: center;
    font-size: 15px;
    line-height: 23px;
  }
  .note {
    margin-left: 13px;
  }

  .qm { font: bold 13px "Liberation Sans", sans-serif; fill: #000080; }
  .qm2 { font: bold 16px "Open Sans", sans-serif; fill: #2450b4; }
  .axis { font: 13px "Open Sans", sans-serif; }
  .cubetext { font-size: 13px; fill: #5b7ea4; }
  .pro { font: bold 6px "Open Sans", sans-serif; fill: #777; }
  .badge { font: bold 14px "Open Sans", sans-serif; fill: #fff; }
</style>
